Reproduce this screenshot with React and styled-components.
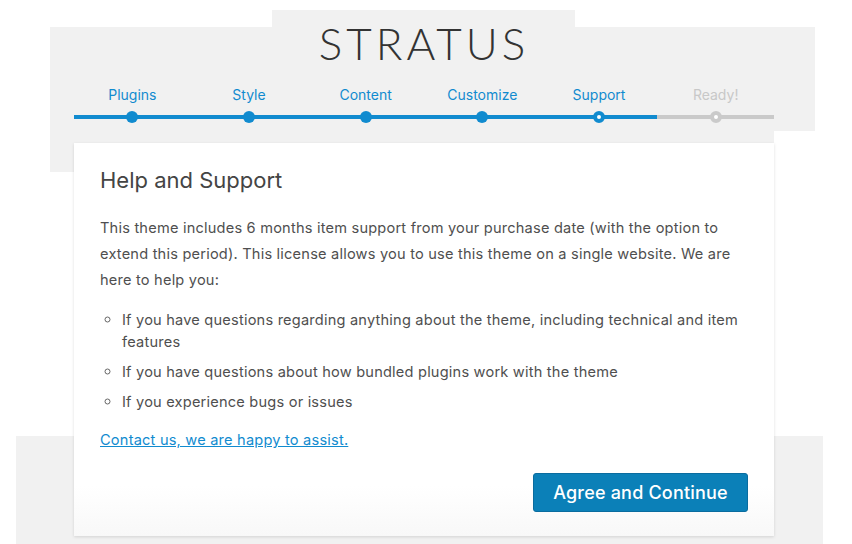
import React from "react";
import styled, { createGlobalStyle } from "styled-components";

const GRAY = "#f1f1f1";
const BLUE = "#118bcf";

const Global = createGlobalStyle`
  html, body { margin: 0; padding: 0; }
  body {
    background-color: #fff;
    background-image:
      linear-gradient(${GRAY}, ${GRAY}),
      linear-gradient(${GRAY}, ${GRAY}),
      linear-gradient(${GRAY}, ${GRAY}),
      linear-gradient(${GRAY}, ${GRAY});
    background-repeat: no-repeat;
    background-position: 272px 10px, 50px 27px, 774px 27px, 16px 436px;
    background-size: 303px 17px, 724px 145px, 41px 104px, 807px 108px;
    font-family: Inter, "Noto Sans", "Liberation Sans", sans-serif;
  }
`;

const Page = styled.div`
  width: 852px;
  height: 544px;
  padding-top: 21px;
  box-sizing: border-box;
  overflow: hidden;
`;

const Logo = styled.div`
  text-align: center;
  font-family: Lato, "Open Sans", sans-serif;
  font-weight: 300;
  font-size: 44px;
  line-height: 44px;
  letter-spacing: 4px;
  color: #333;
  padding-right: 4px;
`;

const Steps = styled.div`
  width: 700px;
  margin: 20px 0 0 74px;
  display: grid;
  grid-template-columns: repeat(6, 1fr);
  row-gap: 6px;
`;

const Label = styled.div`
  text-align: center;
  font-size: 14px;
  line-height: 20px;
  color: ${(p) => (p.$pending ? "#c8c8c8" : BLUE)};
`;

const Segment = styled.div`
  position: relative;
  height: 12px;
  display: flex;
  align-items: center;
  justify-content: center;
  &::before {
    content: "";
    position: absolute;
    left: 0;
    right: 0;
    top: 4px;
    height: 4px;
    background: ${(p) => (p.$pending ? "#cacaca" : BLUE)};
  }
`;

const Dot = styled.span`
  position: relative;
  width: 12px;
  height: 12px;
  border-radius: 50%;
  box-sizing: border-box;
  background: ${(p) => (p.$hollow ? "#fff" : p.$pending ? "#cacaca" : BLUE)};
  border: ${(p) =>
    p.$hollow ? `4px solid ${p.$pending ? "#cacaca" : BLUE}` : "none"};
`;

const Card = styled.div`
  width: 700px;
  margin: 20px 0 0 74px;
  box-sizing: border-box;
  padding: 23px 26px 24px;
  background: linear-gradient(to bottom, #fff 0, #fff calc(100% - 50px), #f8f8f8 100%);
  box-shadow: 0 1px 3px rgba(0, 0, 0, 0.13);
  color: #4f4f4f;
`;

const Heading = styled.h1`
  margin: 0;
  font-size: 22px;
  line-height: 28px;
  font-weight: 400;
  color: #444;
`;

const Para = styled.p`
  margin: 21px 0 0;
  font-size: 14.6px;
  line-height: 26px;
  letter-spacing: 0.2px;
`;

const List = styled.ul`
  margin: 16px 0 0;
  padding-left: 22px;
  list-style: circle;
  font-size: 14.6px;
  line-height: 22px;
  letter-spacing: 0.2px;
`;

const Item = styled.li`
  & + & { margin-top: 8px; }
  &::marker { font-size: 15px; color: #666; }
`;

const Link = styled.a`
  display: block;
  margin-top: 16px;
  font-size: 14.6px;
  line-height: 22px;
  letter-spacing: 0.2px;
  color: ${BLUE};
  text-decoration: underline;
`;

const Actions = styled.div`
  display: flex;
  justify-content: flex-end;
  margin-top: 22px;
`;

const Button = styled.button`
  height: 39px;
  width: 215px;
  box-sizing: border-box;
  border: 1px solid #0a6c9f;
  border-radius: 3px;
  background: #0b80b8;
  color: #fff;
  font-family: inherit;
  font-size: 18px;
  font-weight: 500;
  letter-spacing: 0.2px;
  cursor: pointer;
`;

const steps = [
  { label: "Plugins" },
  { label: "Style" },
  { label: "Content" },
  { label: "Customize" },
  { label: "Support", current: true },
  { label: "Ready!", pending: true },
];

export default function App() {
  return (
    <Page>
      <Global />
      <Logo>STRATUS</Logo>
      <Steps>
        {steps.map((s) => (
          <Label key={s.label} $pending={s.pending}>
            {s.label}
          </Label>
        ))}
        {steps.map((s) => (
          <Segment key={s.label + "-seg"} $pending={s.pending}>
            <Dot $pending={s.pending} $hollow={s.current || s.pending} />
          </Segment>
        ))}
      </Steps>
      <Card>
        <Heading>Help and Support</Heading>
        <Para>
          This theme includes 6 months item support from your purchase date (with the option to
          extend this period). This license allows you to use this theme on a single website. We are
          here to help you:
        </Para>
        <List>
          <Item>
            If you have questions regarding anything about the theme, including technical and item
            features
          </Item>
          <Item>If you have questions about how bundled plugins work with the theme</Item>
          <Item>If you experience bugs or issues</Item>
        </List>
        <Link href="#">Contact us, we are happy to assist.</Link>
        <Actions>
          <Button>Agree and Continue</Button>
        </Actions>
      </Card>
    </Page>
  );
}
